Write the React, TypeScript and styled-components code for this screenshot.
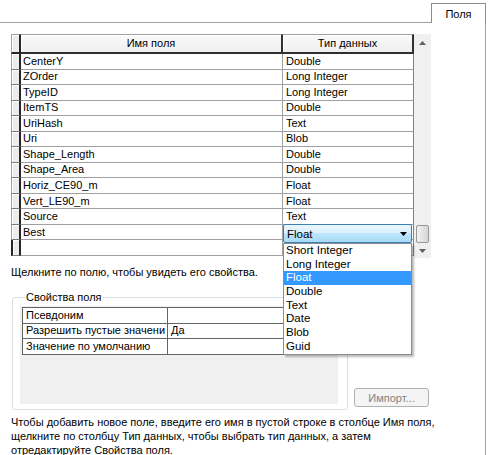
import React from "react";
import styled, { createGlobalStyle } from "styled-components";

const Global = createGlobalStyle`
  * { box-sizing: border-box; }
  html, body { margin: 0; padding: 0; background: #fff; }
  body { font-family: "Liberation Sans", Arial, sans-serif; font-size: 11px; color: #000; }
`;

const Page = styled.div`
  width: 488px;
  height: 455px;
  overflow: hidden;
  background: #fff;
  font-family: "Liberation Sans", Arial, sans-serif;
  font-size: 11px;
`;

const TabStrip = styled.div`
  display: flex;
  height: 23px;
`;

const TabFill = styled.div`
  flex: 1;
  border-bottom: 1px solid #a0a0a0;
`;

const Tab = styled.div`
  width: 55px;
  margin-top: 3px;
  height: 20px;
  border: 1px solid #898c95;
  border-bottom: none;
  background: #fff;
  display: flex;
  justify-content: center;
  padding-top: 4px;
  line-height: 13px;
`;

const TabEnd = styled.div`
  width: 2px;
`;

const Panel = styled.div`
  width: 486px;
  height: 432px;
  border-right: 1px solid #a0a0a0;
  padding: 11px 0 0 11px;
`;

const GridWrap = styled.div`
  position: relative;
  display: flex;
  width: 420px;
  height: 222px;
`;

const Table = styled.div`
  display: grid;
  grid-template-columns: 10px 262px 131px;
  grid-template-rows: 20px repeat(13, 15.54px);
  width: 403px;
`;

const Corner = styled.div`
  background: #ececec;
  border-top: 1px solid #a0a0a0;
  border-left: 1px solid #a0a0a0;
  border-right: 2px solid #262626;
  border-bottom: 2px solid #262626;
  box-shadow: inset 1px 1px #fff;
`;

const HeaderCell = styled.div`
  background: linear-gradient(#fafafa, #efefef);
  border-top: 1px solid #a0a0a0;
  border-right: 2px solid #303030;
  border-bottom: 2px solid #303030;
  box-shadow: inset 1px 1px #fff;
  display: flex;
  align-items: center;
  justify-content: center;
  line-height: 13px;
`;

const RowHead = styled.div<{ $current?: boolean }>`
  background: #ececec;
  border-left: ${(p) => (p.$current ? "2px solid #262626" : "1px solid #a0a0a0")};
  border-right: 2px solid #262626;
  border-bottom: 1px solid #7a7a7a;
  box-shadow: inset 1px 1px #fff;
`;

const Cell = styled.div<{ $last?: boolean }>`
  background: #fff;
  border-bottom: 1px solid #a0a0a0;
  border-right: 1px solid ${(p) => (p.$last ? "#808080" : "#a0a0a0")};
  padding-left: ${(p) => (p.$last ? "3px" : "2px")};
  display: flex;
  align-items: center;
  white-space: nowrap;
  overflow: hidden;
  line-height: 13px;
`;

const ScrollBar = styled.div`
  width: 17px;
  height: 224px;
  background: #f0f0f0;
  display: flex;
  flex-direction: column;
`;

const ScrollBtn = styled.div<{ $h: number }>`
  height: ${(p) => p.$h}px;
  display: flex;
  align-items: center;
  justify-content: center;
`;

const Track = styled.div`
  flex: 1;
  display: flex;
  flex-direction: column;
  justify-content: flex-end;
  align-items: center;
`;

const Thumb = styled.div`
  width: 13px;
  height: 18px;
  border: 1px solid #979797;
  border-radius: 2px;
  background: linear-gradient(90deg, #f3f3f3, #e2e2e2 55%, #d6d6d6);
`;

const Combo = styled.div`
  position: absolute;
  left: 272px;
  top: 190px;
  width: 129px;
  height: 19px;
  border: 1px solid #3c7fb1;
  border-radius: 2px;
  background: linear-gradient(#eaf6fd 0%, #d9f0fc 45%, #bee6fd 50%, #a7d9f5 100%);
  display: flex;
  align-items: center;
  justify-content: space-between;
  padding: 0 4px 0 3px;
  font-size: 11.5px;
  line-height: 14px;
`;

const DropList = styled.div`
  position: absolute;
  left: 272px;
  top: 209px;
  width: 129px;
  border: 1px solid #8d8d8d;
  background: #fff;
  box-shadow: 2px 2px 2px rgba(0, 0, 0, 0.28);
  z-index: 2;
`;

const Item = styled.div<{ $sel?: boolean }>`
  height: 13.7px;
  line-height: 13.7px;
  padding-left: 2px;
  font-size: 11.5px;
  background: ${(p) => (p.$sel ? "#3399ff" : "transparent")};
  color: ${(p) => (p.$sel ? "#fff" : "#000")};
  white-space: nowrap;
`;

const Hint = styled.div`
  margin-top: 9px;
  line-height: 15px;
  white-space: nowrap;
`;

const PropsRow = styled.div`
  display: flex;
  align-items: flex-end;
  gap: 6px;
  margin-top: 10px;
  margin-left: 1px;
`;

const Group = styled.fieldset`
  width: 336px;
  margin: 0;
  padding: 2px 9px 5px 7px;
  border: 1px solid #d5dfe5;
  border-radius: 3px;
  min-width: 0;
`;

const Legend = styled.legend`
  padding: 0 1px;
  margin-left: 5px;
  line-height: 14px;
  font-size: 11px;
`;

const GrayArea = styled.div`
  height: 98px;
  background: #f0f0f0;
  padding: 1px 1px 0 2px;
`;

const PropTable = styled.div`
  display: grid;
  grid-template-columns: 145px 170px;
  grid-template-rows: repeat(3, 15.67px);
  border-top: 1px solid #646464;
  border-left: 1px solid #646464;
  background: #fff;
`;

const PropCell = styled.div`
  border-right: 1px solid #646464;
  border-bottom: 1px solid #646464;
  padding-left: 3px;
  display: flex;
  align-items: center;
  white-space: nowrap;
  overflow: hidden;
  line-height: 13px;
`;

const ImportButton = styled.button`
  width: 75px;
  height: 19px;
  margin-bottom: 3px;
  border: 1px solid #adb2b5;
  border-radius: 3px;
  background: #f4f4f4;
  color: #838383;
  font-family: "Liberation Sans", Arial, sans-serif;
  font-size: 11px;
  padding: 0;
`;

const Help = styled.div`
  margin-top: 5px;
  line-height: 14px;
  white-space: nowrap;
`;

const rows: [string, string][] = [
  ["CenterY", "Double"],
  ["ZOrder", "Long Integer"],
  ["TypeID", "Long Integer"],
  ["ItemTS", "Double"],
  ["UriHash", "Text"],
  ["Uri", "Blob"],
  ["Shape_Length", "Double"],
  ["Shape_Area", "Double"],
  ["Horiz_CE90_m", "Float"],
  ["Vert_LE90_m", "Float"],
  ["Source", "Text"],
  ["Best", ""],
  ["", ""],
];

const types = ["Short Integer", "Long Integer", "Float", "Double", "Text", "Date", "Blob", "Guid"];

const props: [string, string][] = [
  ["Псевдоним", ""],
  ["Разрешить пустые значени", "Да"],
  ["Значение по умолчанию", ""],
];

export default function App() {
  return (
    <Page>
      <Global />
      <TabStrip>
        <TabFill />
        <Tab>Поля</Tab>
        <TabEnd />
      </TabStrip>
      <Panel>
        <GridWrap>
          <Table>
            <Corner />
            <HeaderCell>Имя поля</HeaderCell>
            <HeaderCell>Тип данных</HeaderCell>
            {rows.map(([name, type], i) => (
              <React.Fragment key={i}>
                <RowHead $current={i === rows.length - 1} />
                <Cell>{name}</Cell>
                <Cell $last>{type}</Cell>
              </React.Fragment>
            ))}
          </Table>
          <ScrollBar>
            <ScrollBtn $h={17}>
              <svg width="7" height="4" viewBox="0 0 7 4">
                <path d="M0 4 L3.5 0 L7 4 Z" fill="#606060" />
              </svg>
            </ScrollBtn>
            <Track>
              <Thumb />
            </Track>
            <ScrollBtn $h={15}>
              <svg width="7" height="4" viewBox="0 0 7 4">
                <path d="M0 0 L7 0 L3.5 4 Z" fill="#606060" />
              </svg>
            </ScrollBtn>
          </ScrollBar>
          <Combo>
            <span>Float</span>
            <svg width="7" height="4" viewBox="0 0 7 4">
              <path d="M0 0 L7 0 L3.5 4 Z" fill="#000" />
            </svg>
          </Combo>
          <DropList>
            {types.map((t) => (
              <Item key={t} $sel={t === "Float"}>
                {t}
              </Item>
            ))}
          </DropList>
        </GridWrap>
        <Hint>Щелкните по полю, чтобы увидеть его свойства.</Hint>
        <PropsRow>
          <Group>
            <Legend>Свойства поля</Legend>
            <GrayArea>
              <PropTable>
                {props.map(([k, v]) => (
                  <React.Fragment key={k}>
                    <PropCell>{k}</PropCell>
                    <PropCell>{v}</PropCell>
                  </React.Fragment>
                ))}
              </PropTable>
            </GrayArea>
          </Group>
          <ImportButton disabled>Импорт...</ImportButton>
        </PropsRow>
        <Help>
          Чтобы добавить новое поле, введите его имя в пустой строке в столбце Имя поля,
          <br />
          щелкните по столбцу Тип данных, чтобы выбрать тип данных, а затем
          <br />
          отредактируйте Свойства поля.
        </Help>
      </Panel>
    </Page>
  );
}
